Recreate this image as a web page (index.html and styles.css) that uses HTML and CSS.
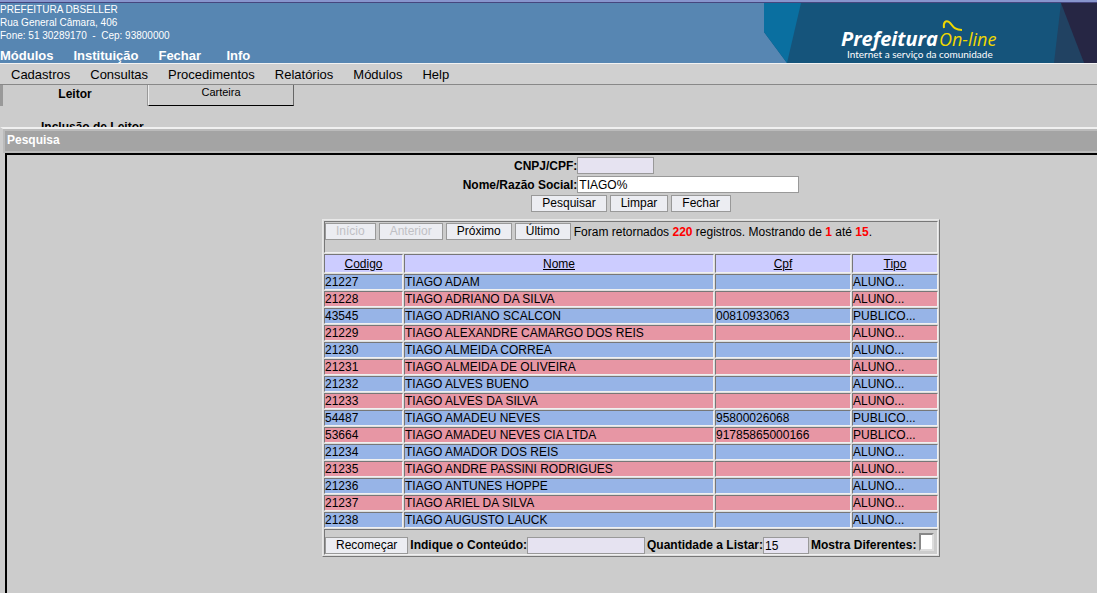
FILE: index.html
```html
<!DOCTYPE html>
<html lang="pt-BR">
<head>
<meta charset="utf-8">
<title>Prefeitura On-line</title>
<link rel="stylesheet" href="styles.css">
</head>
<body>
<header class="header">
  <div class="header-info">
    <address class="org">PREFEITURA DBSELLER<br>Rua General Câmara, 406<br>Fone: 51 30289170 &nbsp;-&nbsp; Cep: 93800000</address>
    <nav class="main-nav"><a href="#">Módulos</a><a href="#">Instituição</a><a href="#">Fechar</a><a href="#">Info</a></nav>
  </div>
  <svg class="logo" width="333" height="60" viewBox="0 0 333 60" role="img" aria-label="Prefeitura On-line">
    <path d="M0 0H333V60H23L0 29Z" fill="#15547b"/>
    <path d="M0 0H37L23 60L0 29Z" fill="#0a6fa0"/>
    <path d="M297 0L290 60H320L299 0Z" fill="#214262"/>
    <path d="M297 0H333V60H320Z" fill="#262644"/>
    <text class="logo-name" x="77" y="43">Prefeitura</text>
    <text class="logo-online" x="175" y="43">On-line</text>
    <path d="M180 25C179 19 182 17 185 19C189 22 189 27 198 27" fill="none" stroke="#f0d800" stroke-width="2"/>
    <text class="logo-sub" x="83" y="55">Internet a serviço da comunidade</text>
  </svg>
</header>
<nav class="menu"><a href="#">Cadastros</a><a href="#">Consultas</a><a href="#">Procedimentos</a><a href="#">Relatórios</a><a href="#">Módulos</a><a href="#">Help</a></nav>
<div class="tabs"><button class="tab tab-active">Leitor</button><button class="tab">Carteira</button></div>
<h2 class="page-title">Inclusão de Leitor</h2>
<section class="window">
  <h1 class="window-title">Pesquisa</h1>
  <div class="window-body">
    <form class="search">
      <label for="cpf">CNPJ/CPF:</label><input class="field field-cpf" id="cpf" type="text">
      <label for="nome">Nome/Razão Social:</label><input class="field field-name" id="nome" type="text" value="TIAGO%" autofocus>
      <div class="search-buttons"><button type="button" class="btn">Pesquisar</button><button type="button" class="btn">Limpar</button><button type="button" class="btn">Fechar</button></div>
    </form>
    <table class="results">
      <colgroup><col class="col-code"><col class="col-name"><col class="col-cpf"><col class="col-type"></colgroup>
      <thead>
      <tr><td colspan="4" class="pager"><div class="bar"><button class="btn" disabled>Início</button><button class="btn" disabled>Anterior</button><button class="btn">Próximo</button><button class="btn">Último</button><span>Foram retornados <b>220</b> registros. Mostrando de <b>1</b> até <b>15</b>.</span></div></td></tr>
      <tr><th><a href="#">Codigo</a></th><th><a href="#">Nome</a></th><th><a href="#">Cpf</a></th><th><a href="#">Tipo</a></th></tr>
      </thead>
      <tbody>
      <tr><td>21227</td><td>TIAGO ADAM</td><td></td><td>ALUNO...</td></tr>
      <tr><td>21228</td><td>TIAGO ADRIANO DA SILVA</td><td></td><td>ALUNO...</td></tr>
      <tr><td>43545</td><td>TIAGO ADRIANO SCALCON</td><td>00810933063</td><td>PUBLICO...</td></tr>
      <tr><td>21229</td><td>TIAGO ALEXANDRE CAMARGO DOS REIS</td><td></td><td>ALUNO...</td></tr>
      <tr><td>21230</td><td>TIAGO ALMEIDA CORREA</td><td></td><td>ALUNO...</td></tr>
      <tr><td>21231</td><td>TIAGO ALMEIDA DE OLIVEIRA</td><td></td><td>ALUNO...</td></tr>
      <tr><td>21232</td><td>TIAGO ALVES BUENO</td><td></td><td>ALUNO...</td></tr>
      <tr><td>21233</td><td>TIAGO ALVES DA SILVA</td><td></td><td>ALUNO...</td></tr>
      <tr><td>54487</td><td>TIAGO AMADEU NEVES</td><td>95800026068</td><td>PUBLICO...</td></tr>
      <tr><td>53664</td><td>TIAGO AMADEU NEVES CIA LTDA</td><td>91785865000166</td><td>PUBLICO...</td></tr>
      <tr><td>21234</td><td>TIAGO AMADOR DOS REIS</td><td></td><td>ALUNO...</td></tr>
      <tr><td>21235</td><td>TIAGO ANDRE PASSINI RODRIGUES</td><td></td><td>ALUNO...</td></tr>
      <tr><td>21236</td><td>TIAGO ANTUNES HOPPE</td><td></td><td>ALUNO...</td></tr>
      <tr><td>21237</td><td>TIAGO ARIEL DA SILVA</td><td></td><td>ALUNO...</td></tr>
      <tr><td>21238</td><td>TIAGO AUGUSTO LAUCK</td><td></td><td>ALUNO...</td></tr>
      </tbody>
      <tfoot>
      <tr><td colspan="4"><div class="bar bar-filter"><button class="btn">Recomeçar</button><span class="pair"><label for="conteudo">Indique o Conteúdo:</label><input class="field field-content" id="conteudo" type="text"></span><span class="pair"><label for="qtd">Quantidade a Listar:</label><input class="field field-count" id="qtd" type="text" value="15"></span><span class="pair"><label for="dif">Mostra Diferentes:</label><input class="check" id="dif" type="checkbox"></span></div></td></tr>
      </tfoot>
    </table>
  </div>
</section>
</body>
</html>
```
FILE: styles.css
```css
* { box-sizing: border-box; }
body {
  margin: 0;
  min-height: 100vh;
  display: flex;
  flex-direction: column;
  background: #ccc;
  color: #000;
  font: 12px/14px "Liberation Sans", Arial, sans-serif;
}
button, input { font: inherit; color: inherit; border-radius: 0; }
a { color: inherit; text-decoration: none; }

.header {
  display: flex;
  justify-content: space-between;
  background: #5786b2;
  color: #fff;
  border-top: 2px solid #8795cd;
  box-shadow: inset 0 1px #46467e;
  height: 63px;
}
.org { font-size: 10px; font-style: normal; line-height: 13px; padding-top: 1px; white-space: nowrap; }
.main-nav { display: flex; gap: 20px; padding-top: 6px; font-size: 13px; font-weight: bold; line-height: 15px; }
.main-nav a { min-width: 48px; }
.logo { flex: none; margin-top: 1px; }
.logo-name, .logo-online { font-family: "Open Sans", sans-serif; font-style: italic; }
.logo-name { font-size: 20px; font-weight: bold; fill: #fff; }
.logo-online { font-size: 18px; fill: #f0d800; }
.logo-sub { font-family: Lato, sans-serif; font-size: 10px; fill: #fff; }

.menu {
  display: flex;
  gap: 20px;
  padding: 4px 11px 2px;
  background: #d0d0d0;
  border-top: 1px solid #f2f2f2;
  border-bottom: 1px solid #888;
  font-size: 13px;
  line-height: 14px;
}
.tabs { display: flex; }
.tab {
  width: 146px;
  height: 21px;
  padding: 0 0 6px;
  background: #ccc;
  border: solid;
  border-width: 0 1px 1px;
  border-color: #fff #666 #000 #eee;
  font-size: 11px;
}
.tab-active {
  width: 148px;
  padding: 0 0 3px;
  border-width: 0 1px 0 3px;
  border-color: #999;
  font-size: 12px;
  font-weight: bold;
}
.page-title { margin: 0; padding: 14px 0 0 41px; height: 21px; overflow: hidden; font-size: 12px; line-height: 14px; }

.window {
  flex: 1;
  display: flex;
  flex-direction: column;
  border-top: 2px solid #f0f0f0;
  border-left: 3px solid #ccc;
}
.window-title {
  margin: 0;
  padding: 2px 2px 4px;
  background: #a4a4a4;
  border: 2px solid #bbb;
  border-right: 0;
  color: #fff;
  font-size: 12px;
  line-height: 14px;
}
.window-body {
  flex: 1;
  display: flex;
  flex-direction: column;
  align-items: center;
  margin-left: 2px;
  padding: 2px 0 0 158px;
  border: solid #000;
  border-width: 2px 0 0 2px;
}
.search {
  display: grid;
  grid-template-columns: auto auto;
  align-items: center;
  row-gap: 2px;
}
.search label, .bar label { font-weight: bold; }
.search label { text-align: right; }
.search-buttons { grid-column: 1 / 3; display: flex; justify-content: center; gap: 3px; }
.btn {
  height: 17px;
  padding: 0 10px;
  background: #ecedf2;
  border: 1px solid #999;
  line-height: 15px;
  white-space: nowrap;
}
.btn:disabled { color: #c0c0c4; }
.field {
  height: 17px;
  padding: 0 1px;
  background: #e6e3f1;
  border: 1px solid #999;
  outline: 0;
}
.field-cpf { width: 77px; }
.field-name { width: 222px; background: #fff; }
.field-content { width: 118px; }
.field-count { width: 46px; }

.results {
  width: 618px;
  margin-top: 7px;
  table-layout: fixed;
  border: 1px solid;
  border-color: #e8e8e8 #777 #777 #e8e8e8;
  border-spacing: 1px;
  background: #ddd;
}
.col-code { width: 79px; }
.col-name { width: 310px; }
.col-cpf { width: 136px; }
.results td, .results th {
  padding: 0;
  border: 1px solid;
  border-color: #777 #f0f0f0 #f0f0f0 #777;
  background: #ccc;
  white-space: nowrap;
}
.results th { height: 19px; background: #ccf; font-weight: normal; }
.results th a { text-decoration: underline; }
.results tbody td { height: 16px; background: #97b4e7; }
.results tbody tr:nth-child(even) td { background: #e796a4; }
.results .pager { height: 32px; vertical-align: top; }
.pager b { color: #f00; }
.bar { display: flex; align-items: center; gap: 3px; padding-top: 1px; }
.bar-filter { gap: 2px; height: 24px; align-items: flex-end; padding: 0; }
.pair { display: flex; align-items: flex-end; }
.pair label { line-height: 17px; }
.check {
  appearance: none;
  width: 15px;
  height: 18px;
  margin: 0 0 3px 3px;
  background: #fff;
  border: 2px solid;
  border-color: #888 #ddd #ddd #888;
}
```
